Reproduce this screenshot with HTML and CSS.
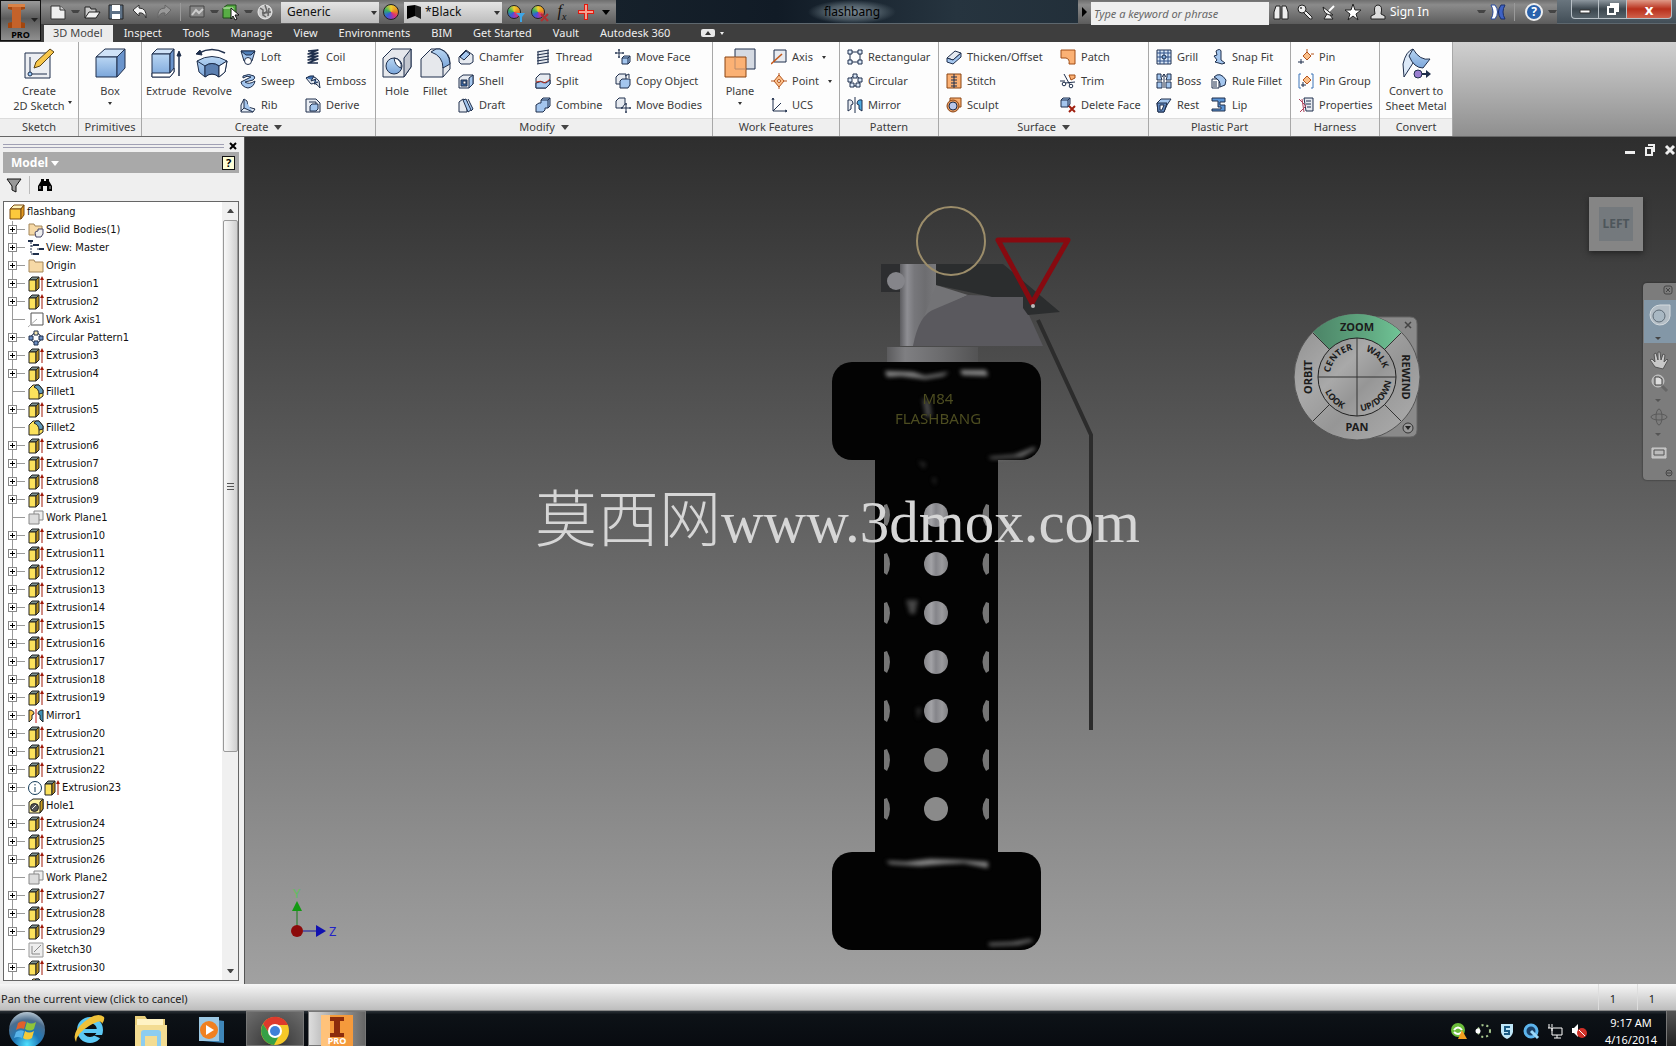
FILE: index.html
```html
<!DOCTYPE html>
<html lang="en">
<head>
<meta charset="utf-8">
<title>flashbang</title>
<link rel="stylesheet" href="styles.css">
</head>
<body>
<svg class="defs" aria-hidden="true">
  <defs>
    <linearGradient id="g-blue" x1="0" y1="0" x2="0" y2="1"><stop offset="0" stop-color="#b9d6f3"/><stop offset="1" stop-color="#7ba6da"/></linearGradient>
    <linearGradient id="g-steel" x1="0" x2="1" y1="0" y2="0"><stop offset="0" stop-color="#5c5c60"/><stop offset=".2" stop-color="#8e8e93"/><stop offset=".4" stop-color="#77777b"/><stop offset=".7" stop-color="#6d6d70"/><stop offset="1" stop-color="#78787b"/></linearGradient>
    <linearGradient id="g-neck" x1="0" x2="1" y1="0" y2="0"><stop offset="0" stop-color="#5b5b5d"/><stop offset=".2" stop-color="#7f7f82"/><stop offset=".6" stop-color="#6b6b6d"/><stop offset="1" stop-color="#535354"/></linearGradient>
    <linearGradient id="g-hole" x1="0" x2="1" y1="0" y2="0"><stop offset="0" stop-color="#87878a"/><stop offset=".3" stop-color="#a2a2a6"/><stop offset=".5" stop-color="#85858a"/><stop offset=".75" stop-color="#9a9a9d"/><stop offset="1" stop-color="#808083"/></linearGradient>
    <radialGradient id="g-orb" cx=".5" cy=".9" r=".9"><stop offset="0" stop-color="#4fe0ff"/><stop offset=".4" stop-color="#1e78b8"/><stop offset=".75" stop-color="#4c6d8d"/><stop offset="1" stop-color="#b8c8d4"/></radialGradient>
    <linearGradient id="g-wheel" x1="0" y1="0" x2="1" y2="1"><stop offset="0" stop-color="#8c8c8c"/><stop offset=".35" stop-color="#a9a9a9"/><stop offset=".6" stop-color="#969696"/><stop offset="1" stop-color="#b0b0b0"/></linearGradient>
    <linearGradient id="g-green" x1="0" x2="1" y1="0" y2="0"><stop offset="0" stop-color="#4c8467"/><stop offset=".6" stop-color="#5fa67f"/><stop offset="1" stop-color="#70c496"/></linearGradient>
    <filter id="soft" x="-20%" y="-60%" width="140%" height="220%"><feGaussianBlur stdDeviation="2"/></filter>
  </defs>
  <!-- large ribbon icons -->
  <symbol id="b-sketch" viewBox="0 0 32 32"><rect x="2" y="6" width="25" height="25" fill="#eceef2"/><path d="M7 10v17h17" fill="none"/><circle cx="7" cy="27" r="2" fill="#9cf"/><path d="M11 21l2-6L27 2l4 3-14 14z" fill="#f7c64a" stroke="#5a4416"/></symbol>
  <symbol id="b-box" viewBox="0 0 32 32"><path d="M2 10l9-8h20l-8 8z" fill="#cfe2f7"/><path d="M2 10h21v20H2z" fill="url(#g-blue)"/><path d="M23 10l8-8v19l-8 9z" fill="#6a94cc"/></symbol>
  <symbol id="b-extrude" viewBox="0 0 32 32"><path d="M2 7l5-5h17l-4 5z" fill="#cfe2f7"/><path d="M2 7h18v23H2z" fill="url(#g-blue)"/><path d="M20 7l4-5v23l-4 5z" fill="#6a94cc"/><path d="M2 26h18l4-5v4l-4 5H2z" fill="#fff"/><path d="M29 29V6" stroke-width="1.5"/><path d="M27 9l2-5 2 5z" fill="#1f2f4c"/></symbol>
  <symbol id="b-revolve" viewBox="0 0 32 32"><path d="M1 14q15-9 30 0l-2 11-6 5q-7-6-14 0l-6-5z" fill="url(#g-blue)"/><path d="M1 14l8 5q7-5 14 0l8-5M9 19v11M23 19v11" fill="none"/><path d="M9 19q7-5 14 0v11q-7-6-14 0z" fill="#5b7fb0"/><path d="M23 19l8-5-2 11-6 5z" fill="#fff"/><path d="M3 6q13-7 26 0" fill="none" stroke-width="1.600"/><path d="M0 7l4-4 2 5z" fill="#1f2f4c"/></symbol>
  <symbol id="b-hole" viewBox="0 0 32 32"><path d="M2 11l9-9h19v18l-7 10H2z" fill="#e6e8ec"/><path d="M23 11l7-9v18l-7 10z" fill="#c3c7d0"/><circle cx="13" cy="19" r="8" fill="url(#g-blue)"/><path d="M13 11a8 8 0 0 1 7 10q-6-2-7-10z" fill="#fff"/></symbol>
  <symbol id="b-fillet" viewBox="0 0 32 32"><path d="M2 12l10-10h9q10 3 10 14v6l-7 8H2z" fill="#e6e8ec"/><path d="M12 5l5-3h4q9 3 10 15l-7 4q0-12-12-16z" fill="url(#g-blue)"/><path d="M24 20v10"/></symbol>
  <symbol id="b-plane" viewBox="0 0 32 32"><rect x="11" y="2" width="20" height="20" fill="#d5dae2"/><rect x="1" y="10" width="21" height="20" fill="#fbb174" stroke="#8a4413"/><path d="M11 10v12h11" fill="none" stroke="#b98a6a"/></symbol>
  <symbol id="b-convert" viewBox="0 0 32 32"><path d="M3 17Q6 4 13 2v14L4 30z" fill="#dce9f8"/><path d="M13 2q7 12 17 10l-7 9q-9 0-14-12z" fill="url(#g-blue)"/><circle cx="18" cy="27" r="4" fill="#9a7fd0"/><path d="M22 27h7" stroke-width="2"/><path d="M26 23l5 4-5 4z" fill="#1f2f4c" stroke="none"/></symbol>
  <!-- small ribbon icons -->
  <symbol id="s-loft" viewBox="0 0 16 16"><path d="M1 2h14l-3 10H4z"/><path d="M1 2l5 4h5l4-4z" fill="#4f7fb9"/><circle cx="8" cy="12" r="3.500" fill="#fff"/></symbol>
  <symbol id="s-sweep" viewBox="0 0 16 16"><path d="M3 3q6-3 11 0 2 2-1 4l-8 2q4 3 10-1-1 6-7 7-6-1-7-6l10-5q-4-2-8 1z"/></symbol>
  <symbol id="s-rib" viewBox="0 0 16 16"><path d="M1 8l3-6 3 2 1 6 7 2-2 3H1z" fill="#e4ecf6"/><path d="M4 2v9l9 4M4 11l-3 3"/></symbol>
  <symbol id="s-coil" viewBox="0 0 16 16"><path d="M3 2l10-1L3 5l10-1L3 8l10-1L3 11l10-1L3 14l10 0" fill="none" stroke-width="1.400"/></symbol>
  <symbol id="s-emboss" viewBox="0 0 16 16"><path d="M1 5q8-4 13 3l1 7q-4-6-9-4z" fill="#dfe6ef"/><path d="M1 5q4-3 8-2L6 8l5-2-2 5 4-2" fill="#3f6fae"/></symbol>
  <symbol id="s-derive" viewBox="0 0 16 16"><path d="M1 2h10l4 4v9H1z" fill="#e9edf3"/><path d="M4 5h7v3" fill="none"/><path d="M5 9l2-2h6v5l-2 2H5z"/></symbol>
  <symbol id="s-chamfer" viewBox="0 0 16 16"><path d="M1 8l7-7 7 5v7l-3 2H3l-2-2z" fill="#e6eaf0"/><path d="M2 8l6-6 4 3-6 6z"/></symbol>
  <symbol id="s-shell" viewBox="0 0 16 16"><path d="M1 5l4-3h10v9l-4 4H1z" fill="#e6eaf0"/><path d="M11 5l4-3v9l-4 4z"/><rect x="3" y="7" width="6" height="6" fill="#3f6fae"/><rect x="5" y="8" width="3" height="3" fill="#fff"/></symbol>
  <symbol id="s-draft" viewBox="0 0 16 16"><path d="M1 5l4-3 4 2v11H1z" fill="#e6eaf0"/><path d="M5 3l3-1 5 11-3 2zM10 2l5 10-2 2"/></symbol>
  <symbol id="s-thread" viewBox="0 0 16 16"><path d="M3 1h10v14H3z" fill="#e6eaf0" stroke="none"/><path d="M2 3l12-2M2 6l12-2M2 9l12-2M2 12l12-2M2 15l12-2M3 3v12M13 1v12" fill="none"/></symbol>
  <symbol id="s-split" viewBox="0 0 16 16"><path d="M1 5l4-4h10v10l-4 4H1z" fill="#e6eaf0"/><path d="M1 10v5h10l4-4V7l-4 3q-5-3-10 0z"/><path d="M1 9q5-2 8 1 3-1 6-4" stroke="#c03020" fill="none"/></symbol>
  <symbol id="s-combine" viewBox="0 0 16 16"><path d="M1 8l3-2h2V3l2-2h7v8l-2 2h-3v2l-2 2H1z"/><path d="M6 3h7v8M13 3l2-2" fill="none"/></symbol>
  <symbol id="s-mface" viewBox="0 0 16 16"><path d="M4 0v9M0 4h9M3 1h2M3 8h2M1 3v2M8 3v2"/><path d="M7 9l2-2h6v6l-2 2H7z"/><path d="M7 9h6v6M13 9l2-2" fill="none"/></symbol>
  <symbol id="s-copy" viewBox="0 0 16 16"><path d="M1 4l3-3h7v6l-3 4H1z" fill="#e6eaf0"/><path d="M5 8l2-2h8v6l-2 3H5z"/><path d="M10 3l4-2v4" fill="none"/></symbol>
  <symbol id="s-mbody" viewBox="0 0 16 16"><path d="M1 4l3-3h6v6l-3 4H1z" fill="#e6eaf0"/><path d="M11 6v10M6 11h10M10 7h2M10 15h2M7 10v2M15 10v2"/></symbol>
  <symbol id="s-axis" viewBox="0 0 16 16"><path d="M3 1h12v12H3z" fill="#e8ebf0"/><path d="M0 15L11 5" stroke="#c4581a" stroke-width="1.600"/></symbol>
  <symbol id="s-point" viewBox="0 0 16 16"><path d="M8 2l5 6-5 6-5-6z" fill="#fbc08a" stroke="#b5541c"/><path d="M0 8h3M13 8h3M8 0v2M8 14v2" stroke="#b5541c"/><circle cx="8" cy="8" r="1.500" fill="#fff" stroke="#b5541c"/></symbol>
  <symbol id="s-ucs" viewBox="0 0 16 16"><path d="M2 1v13h14M2 14l8-8M1 3l1-2 1 2M14 13l2 1-2 1" fill="none"/></symbol>
  <symbol id="s-rect" viewBox="0 0 16 16"><path d="M3 3h10v10H3z" fill="none"/><path d="M1 1h4v4H1zM11 1h4v4h-4zM1 11h4v4H1zM11 11h4v4h-4z" fill="#dce9f8"/></symbol>
  <symbol id="s-circ" viewBox="0 0 16 16"><circle cx="8" cy="8" r="5" fill="none"/><path d="M6 1h4v4H6zM11 5h4v4h-4zM1 5h4v4H1zM3 10h4v4H3zM9 10h4v4H9z" fill="#dce9f8"/></symbol>
  <symbol id="s-mirror" viewBox="0 0 16 16"><path d="M1 3q5-1 5 4l-2 1v4l-3 2z" fill="#e6eaf0"/><path d="M15 3q-5-1-5 4l2 1v4l3 2z" fill="#4fa9df"/><path d="M8 0v16"/></symbol>
  <symbol id="s-thick" viewBox="0 0 16 16"><path d="M1 9l8-7 6 2-8 7z" fill="#e6eaf0"/><path d="M1 9l6 2 8-7v4l-8 7-6-2z"/></symbol>
  <symbol id="s-stitch" viewBox="0 0 16 16"><path d="M1 1h14v14H1z" fill="#fbb174" stroke="#8a4413"/><path d="M8 1v14M5 4h6M5 7h6M5 10h6M5 13h6"/></symbol>
  <symbol id="s-sculpt" viewBox="0 0 16 16"><path d="M4 1h11v9H4z" fill="#fbb174" stroke="#8a4413"/><circle cx="7" cy="9" r="6" fill="#e59a62" stroke="#8a4413"/><circle cx="7" cy="9" r="4" fill="#b8c6ea"/></symbol>
  <symbol id="s-patch" viewBox="0 0 16 16"><path d="M1 1h14v14h-6q1-5-3-6H1z" fill="#fbb174" stroke="#a04d16"/></symbol>
  <symbol id="s-trim" viewBox="0 0 16 16"><path d="M9 2h6v3l-4 2z" fill="#fbb174" stroke="#a04d16"/><path d="M0 8h5M4 1l6 11M15 9L5 10" fill="none"/><circle cx="11" cy="13" r="1.800" fill="#fff"/><circle cx="4" cy="11" r="1.800" fill="#fff"/></symbol>
  <symbol id="s-delface" viewBox="0 0 16 16"><path d="M1 3l2-2h7v6l-2 3H1z"/><path d="M8 3v7M8 3l2-2M1 3h7" fill="none"/><path d="M9 9l6 6M15 9l-6 6" stroke="#a02010" stroke-width="2"/></symbol>
  <symbol id="s-grill" viewBox="0 0 16 16"><path d="M1 1h14v14H1z" fill="#d7e5f6"/><path d="M4 1v14M8 1v14M12 1v14M1 4h14M1 8h14M1 12h14" stroke="#2d4f86"/><circle cx="8" cy="8" r="2" fill="#7ba6da"/></symbol>
  <symbol id="s-boss" viewBox="0 0 16 16"><path d="M1 1h4v3l1 3-5 0zM11 1h4v6h-5l1-3zM1 9h5v6H1zM10 9h5v6h-5z"/><path d="M8 15V1M6 4l2-3 2 3" fill="none"/></symbol>
  <symbol id="s-rest" viewBox="0 0 16 16"><path d="M1 6l4-4h10l-4 6-3 7H2z"/><path d="M1 6h10l-3 9H2z" fill="#5f86bd"/><path d="M4 8h4l-2 5H4z" fill="#fff"/></symbol>
  <symbol id="s-snap" viewBox="0 0 16 16"><path d="M5 2q4-3 5 0v9l4 3-3 1-7-2 2-2-3-4 3-1z"/></symbol>
  <symbol id="s-rulef" viewBox="0 0 16 16"><path d="M3 4q6-6 12 3l-1 5-5 2q1-7-6-10z"/><path d="M1 6h5l2 2v7H1z" fill="#fff"/><path d="M2 9h4M2 11h4M2 13h4"/></symbol>
  <symbol id="s-lip" viewBox="0 0 16 16"><path d="M1 1h13v4H9v3h5v6H1v-2h9v-2H7V4H1z" fill="#5c95d6"/></symbol>
  <symbol id="s-pin" viewBox="0 0 16 16"><path d="M9 3l4 4-4 4-4-4z" fill="#fbc08a" stroke="#b5541c"/><path d="M13 5h3M9 0v3" stroke="#b5541c"/><path d="M3 10v5M0 13h6"/></symbol>
  <symbol id="s-ping" viewBox="0 0 16 16"><path d="M3 1H1v14h2M13 1h2v14h-2" fill="none" stroke="#3c74b8"/><path d="M9 3l4 4-4 4-4-4z" fill="#fbc08a" stroke="#b5541c"/><path d="M5 9v5M3 12h5"/></symbol>
  <symbol id="s-prop" viewBox="0 0 16 16"><path d="M6 1h9v13H8z" fill="#e6eaf0"/><path d="M8 4h5M8 7h5M9 10h4"/><path d="M1 2l7 7-6 6M4 2l2 13" fill="none" stroke="#b0405a"/></symbol>
  <!-- browser tree icons -->
  <symbol id="t-ext" viewBox="0 0 16 16"><path d="M1 4l3-3h7L8 4z" fill="#7d9390" stroke="#222"/><path d="M1 4h7v11H1z" fill="#fce25c" stroke="#222"/><path d="M8 4l3-3v11l-3 3z" fill="#b88f1c" stroke="#222"/><path d="M14 15V3" stroke="#a01808"/><path d="M12 4l2-4 2 4z" fill="#a01808" stroke="none"/></symbol>
  <symbol id="t-part" viewBox="0 0 16 16"><path d="M1 5l4-4h10l-3 4z" fill="#fff2b8" stroke="#7a4a10"/><path d="M1 5h11v10H1z" fill="#fcc93c" stroke="#7a4a10"/><path d="M12 5l3-4v10l-3 4z" fill="#e29a20" stroke="#7a4a10"/></symbol>
  <symbol id="t-fold" viewBox="0 0 16 16"><path d="M1 14V2h5l1 2h8v10z" fill="#f6d9a6" stroke="#a3865a"/></symbol>
  <symbol id="t-solid" viewBox="0 0 16 16"><path d="M1 13V2h5l1 2h7v9z" fill="#f6d9a6" stroke="#a3865a"/><path d="M7 11q0-2 3-2V7h5v5l-2 3H8z" fill="#eee" stroke="#446"/></symbol>
  <symbol id="t-view" viewBox="0 0 16 16"><path d="M3 2v12h4M3 6h3M9 9h3" fill="none" stroke-dasharray="2 1"/><path d="M0 1h5M5 5h6M11 9h5M5 14h6" stroke-width="2"/></symbol>
  <symbol id="t-axis" viewBox="0 0 16 16"><path d="M3 1h12v12H3z" fill="#fff" stroke="#555"/><path d="M0 15L9 7" stroke="#aaa"/></symbol>
  <symbol id="t-circ" viewBox="0 0 16 16"><circle cx="8" cy="8" r="5" fill="none"/><path d="M6 1h4v4H6z" fill="#f5e7b0"/><path d="M11 6h4v4h-4zM1 6h4v4H1zM6 11h4v4H6z" fill="#6d8fc2"/></symbol>
  <symbol id="t-fil" viewBox="0 0 16 16"><path d="M1 5l4-4h6l4 5v6l-4 3H1z" fill="#fce25c" stroke="#222"/><path d="M6 3l2-2h3l4 5v3l-4 1q0-5-5-7z" fill="#5f97b8" stroke="#222"/><path d="M11 10v5" stroke="#222"/></symbol>
  <symbol id="t-plane" viewBox="0 0 16 16"><path d="M6 1h9v9H6z" fill="#eee" stroke="#888"/><path d="M1 4h10v10H1z" fill="#dcdcdc" stroke="#888"/></symbol>
  <symbol id="t-mir" viewBox="0 0 16 16"><path d="M1 2q5 0 5 4l-2 1v4l-3 3z" fill="#f7c64a" stroke="#222"/><path d="M15 2q-5 0-5 4l2 1v4l3 3z" fill="#3f8fb4" stroke="#222"/><path d="M8 1v14" stroke="#c01010"/></symbol>
  <symbol id="t-hole" viewBox="0 0 16 16"><path d="M1 4l4-3h10v10l-3 4H1z" fill="#fff2a0" stroke="#222"/><path d="M12 4l3-3v10l-3 4z" fill="#c99d20" stroke="#222"/><circle cx="6.500" cy="9.500" r="4" fill="#555" stroke="#222"/><path d="M4 11l4-4" stroke="#eee"/></symbol>
  <symbol id="t-sk" viewBox="0 0 16 16"><path d="M1 1h14v14H1z" fill="#eee" stroke="#999"/><path d="M4 4v8h8M6 10l7-7" fill="none" stroke="#888"/></symbol>
  <symbol id="t-info" viewBox="0 0 16 16"><circle cx="7" cy="8" r="6.500" fill="#fff" stroke="#123a58"/><path d="M7 7v5M7 4v1.500" stroke="#123a58"/></symbol>
  <symbol id="t-bino" viewBox="0 0 16 16"><path d="M1 14V9l3-5V2h3v2h2V2h3v2l3 5v5h-5V9H6v5z" fill="#000" stroke="none"/><path d="M3 9v3M13 9v3" stroke="#bbb"/></symbol>
</svg>

<div class="app">
  <header class="top">
    <button class="appbtn" aria-label="Application menu">
      <svg viewBox="0 0 41 41" width="41" height="41"><path d="M8 4h17v5l-4 1v12l4 1v5H8v-5l4-1V10L8 9z" fill="#a3470f"/><path d="M12 4h9v24h-9z" fill="#c4622a"/><path d="M8 4h17v3H8z" fill="#d98247"/><path d="M31 18h7l-3.500 4z" fill="#222"/></svg>
      <span>PRO</span>
    </button>
    <div class="topright">
      <div class="title">
        <div class="qat">
          <button aria-label="New"><svg class="q" viewBox="0 0 16 16"><path d="M1 2h9l5 4v9H1z" fill="#eee" stroke="#333"/><path d="M10 2v4h5" fill="#ccc" stroke="#333"/></svg></button><i class="dot"></i>
          <button aria-label="Open"><svg class="q" viewBox="0 0 16 16"><path d="M1 14V3h5l1 2h5v3" fill="#ccc" stroke="#222"/><path d="M1 14l4-6h11l-4 6z" fill="#f0f0f0" stroke="#222"/></svg></button>
          <button aria-label="Save"><svg class="q" viewBox="0 0 16 16"><path d="M1 1h14v14H1z" fill="#5d7186" stroke="#222"/><path d="M4 1h8v6H4zM4 10h8v5H4z" fill="#fff"/></svg></button>
          <button aria-label="Undo"><svg class="q" viewBox="0 0 16 16"><path d="M1 6l6-5v3q8 0 7 10-2-6-7-5v3z" fill="#f4f4f4" stroke="#333"/></svg></button>
          <button aria-label="Redo"><svg class="q" viewBox="0 0 16 16"><path d="M15 6L9 1v3Q1 4 2 14q2-6 7-5v3z" fill="#999" stroke="#666"/></svg></button>
          <i class="vsep"></i>
          <button aria-label="Select"><svg class="q" viewBox="0 0 16 16"><path d="M1 2h14v11H1z" fill="#888" stroke="#444"/><path d="M3 11l4-5 3 3 4-4" fill="none" stroke="#ccc" stroke-width="2"/></svg></button><i class="dot"></i>
          <button aria-label="Select bodies"><svg class="q" viewBox="0 0 16 16"><path d="M0 4l4-3h9v9l-3 4H0z" fill="#58ae45" stroke="#1d4a16"/><path d="M0 4h10v10" fill="none" stroke="#d4f0c8"/><path d="M8 4v11l2-3 2 4 2-1-2-4h4z" fill="#fff" stroke="#111"/></svg></button><i class="dot"></i>
          <button aria-label="Material"><svg class="q" viewBox="0 0 16 16"><circle cx="8" cy="8" r="7" fill="#c8c8c8" stroke="#eee"/><path d="M3 4l3 2v5l3 2M8 1l2 6-3 3M12 4l-1 8M5 9l9-1" fill="none" stroke="#666" stroke-width="1.500"/></svg></button>
          <label class="sel gen"><select aria-label="Material"><option>Generic</option></select></label>
          <button aria-label="Appearance"><i class="hue"></i></button>
          <label class="sel blk"><svg width="14" height="16" viewBox="0 0 14 16"><path d="M0 2l8-1v11l-8 3z" fill="#000"/><path d="M8 1l6 2v12l-6-3z" fill="#222"/></svg><select aria-label="Appearance"><option>*Black</option></select></label>
          <button aria-label="Adjust"><i class="hue sm"></i><svg class="ov" width="9" height="9" viewBox="0 0 9 9"><path d="M0 0h9L6 4v5H4V4z" fill="#3da6e8"/></svg></button>
          <button aria-label="Clear"><i class="hue sm"></i><svg class="ov" width="9" height="9" viewBox="0 0 9 9"><path d="M1 1l7 7M8 1L1 8" stroke="#b03030" stroke-width="2"/></svg></button>
          <button class="fx" aria-label="Parameters"><i>f</i><sub>x</sub></button>
          <button aria-label="Add"><svg class="q" viewBox="0 0 16 16"><path d="M8 0v16M0 8h16" stroke="#e01a10" stroke-width="4"/><path d="M8 1v14M1 8h14" stroke="#f7a090" stroke-width="2"/></svg></button>
          <button class="tri" aria-label="Customize"></button>
        </div>
        <div class="caption"><span>flashbang</span></div>
        <div class="info">
          <i class="play"></i>
          <input type="text" placeholder="Type a keyword or phrase" aria-label="Search help">
          <button aria-label="Search"><svg class="q" viewBox="0 0 16 16"><path d="M1 15V8l2-6h4v13zM9 15V2h4l2 6v7z" fill="#eee" stroke="#222"/></svg></button>
          <button aria-label="Key"><svg class="q" viewBox="0 0 16 16"><path d="M6 8l7 7q3 1 2-2L8 6z" fill="#eee" stroke="#222"/><circle cx="5" cy="5" r="4" fill="#eee" stroke="#222"/><circle cx="4" cy="4" r="1" fill="#444"/></svg></button>
          <button aria-label="Communication"><svg class="q" viewBox="0 0 16 16"><path d="M2 3q1 9 10 8zM6 10l-3 5h9l-3-4" fill="#eee" stroke="#222"/><path d="M8 7l5-5" stroke="#fff" stroke-width="2" fill="none"/></svg></button>
          <button aria-label="Favorites"><svg class="q" viewBox="0 0 16 16"><path d="M8 0l2 6h6l-5 4 2 6-5-4-5 4 2-6-5-4h6z" fill="#fff" stroke="#222"/></svg></button>
          <button class="sign"><svg class="q" viewBox="0 0 16 16"><path d="M5 10Q3 1 8 1t3 9l4 2v3H1v-3z" fill="#ddd" stroke="#222"/></svg>Sign In</button>
          <i class="dot push"></i>
          <button aria-label="Exchange"><svg class="q" viewBox="0 0 16 16"><path d="M1 1h4q5 7 0 14H1q4-7 0-14z" fill="#fff" stroke="#27489c"/><path d="M15 1h-4q-5 7 0 14h4q-4-7 0-14z" fill="#3e62c4" stroke="#1b2f6b"/></svg></button>
          <i class="vsep"></i>
          <button class="help" aria-label="Help">?</button><i class="dot"></i>
        </div>
        <div class="win">
          <button aria-label="Minimize"><svg width="12" height="10" viewBox="0 0 12 10"><path d="M1 6h10v3H1z" fill="#fff" stroke="#333"/></svg></button>
          <button aria-label="Restore"><svg width="12" height="12" viewBox="0 0 12 12"><path d="M4 1h7v7H9V3H4zM1 4h7v7H1z" fill="none" stroke="#fff" stroke-width="2"/></svg></button>
          <button class="close" aria-label="Close">x</button>
        </div>
      </div>
      <nav class="tabs">
        <a href="#" class="on">3D Model</a><a href="#">Inspect</a><a href="#">Tools</a><a href="#">Manage</a><a href="#">View</a><a href="#">Environments</a><a href="#">BIM</a><a href="#">Get Started</a><a href="#">Vault</a><a href="#">Autodesk 360</a>
        <button class="mini" aria-label="Minimize ribbon"></button><i class="mcaret"></i>
      </nav>
    </div>
  </header>

  <section class="ribbon" aria-label="Ribbon">
    <div class="panel p-sketch"><div class="body"><button class="big"><svg class="ic"><use href="#b-sketch"/></svg>Create<br>2D Sketch<i class="car side"></i></button></div><h2>Sketch</h2></div>
    <div class="panel p-prim"><div class="body"><button class="big"><svg class="ic"><use href="#b-box"/></svg>Box<i class="car"></i></button></div><h2>Primitives</h2></div>
    <div class="panel p-create"><div class="body">
      <button class="big"><svg class="ic"><use href="#b-extrude"/></svg>Extrude</button>
      <button class="big"><svg class="ic"><use href="#b-revolve"/></svg>Revolve</button>
      <div class="col"><button><svg class="ic"><use href="#s-loft"/></svg>Loft</button><button><svg class="ic"><use href="#s-sweep"/></svg>Sweep</button><button><svg class="ic"><use href="#s-rib"/></svg>Rib</button></div>
      <div class="col"><button><svg class="ic"><use href="#s-coil"/></svg>Coil</button><button><svg class="ic"><use href="#s-emboss"/></svg>Emboss</button><button><svg class="ic"><use href="#s-derive"/></svg>Derive</button></div>
    </div><h2>Create <i class="dn"></i></h2></div>
    <div class="panel p-modify"><div class="body">
      <button class="big"><svg class="ic"><use href="#b-hole"/></svg>Hole</button>
      <button class="big"><svg class="ic"><use href="#b-fillet"/></svg>Fillet</button>
      <div class="col"><button><svg class="ic"><use href="#s-chamfer"/></svg>Chamfer</button><button><svg class="ic"><use href="#s-shell"/></svg>Shell</button><button><svg class="ic"><use href="#s-draft"/></svg>Draft</button></div>
      <div class="col"><button><svg class="ic"><use href="#s-thread"/></svg>Thread</button><button><svg class="ic"><use href="#s-split"/></svg>Split</button><button><svg class="ic"><use href="#s-combine"/></svg>Combine</button></div>
      <div class="col"><button><svg class="ic"><use href="#s-mface"/></svg>Move Face</button><button><svg class="ic"><use href="#s-copy"/></svg>Copy Object</button><button><svg class="ic"><use href="#s-mbody"/></svg>Move Bodies</button></div>
    </div><h2>Modify <i class="dn"></i></h2></div>
    <div class="panel p-work"><div class="body">
      <button class="big"><svg class="ic"><use href="#b-plane"/></svg>Plane<i class="car"></i></button>
      <div class="col"><button><svg class="ic"><use href="#s-axis"/></svg>Axis<i class="car in"></i></button><button><svg class="ic"><use href="#s-point"/></svg>Point<i class="car in"></i></button><button><svg class="ic"><use href="#s-ucs"/></svg>UCS</button></div>
    </div><h2>Work Features</h2></div>
    <div class="panel p-pattern"><div class="body">
      <div class="col"><button><svg class="ic"><use href="#s-rect"/></svg>Rectangular</button><button><svg class="ic"><use href="#s-circ"/></svg>Circular</button><button><svg class="ic"><use href="#s-mirror"/></svg>Mirror</button></div>
    </div><h2>Pattern</h2></div>
    <div class="panel p-surface"><div class="body">
      <div class="col"><button><svg class="ic"><use href="#s-thick"/></svg>Thicken/Offset</button><button><svg class="ic"><use href="#s-stitch"/></svg>Stitch</button><button><svg class="ic"><use href="#s-sculpt"/></svg>Sculpt</button></div>
      <div class="col"><button><svg class="ic"><use href="#s-patch"/></svg>Patch</button><button><svg class="ic"><use href="#s-trim"/></svg>Trim</button><button><svg class="ic"><use href="#s-delface"/></svg>Delete Face</button></div>
    </div><h2>Surface <i class="dn"></i></h2></div>
    <div class="panel p-plastic"><div class="body">
      <div class="col"><button><svg class="ic"><use href="#s-grill"/></svg>Grill</button><button><svg class="ic"><use href="#s-boss"/></svg>Boss</button><button><svg class="ic"><use href="#s-rest"/></svg>Rest</button></div>
      <div class="col"><button><svg class="ic"><use href="#s-snap"/></svg>Snap Fit</button><button><svg class="ic"><use href="#s-rulef"/></svg>Rule Fillet</button><button><svg class="ic"><use href="#s-lip"/></svg>Lip</button></div>
    </div><h2>Plastic Part</h2></div>
    <div class="panel p-harness"><div class="body">
      <div class="col"><button><svg class="ic"><use href="#s-pin"/></svg>Pin</button><button><svg class="ic"><use href="#s-ping"/></svg>Pin Group</button><button><svg class="ic"><use href="#s-prop"/></svg>Properties</button></div>
    </div><h2>Harness</h2></div>
    <div class="panel p-convert"><div class="body"><button class="big"><svg class="ic"><use href="#b-convert"/></svg>Convert to<br>Sheet Metal</button></div><h2>Convert</h2></div>
  </section>

  <main class="work">
    <aside class="browser">
      <div class="grip"><i></i><button aria-label="Close browser"><svg width="8" height="8" viewBox="0 0 8 8"><path d="M1 1l6 6M7 1L1 7" stroke="#000" stroke-width="2"/></svg></button></div>
      <div class="bhead"><button>Model <i></i></button><button class="bhelp" aria-label="Help">?</button></div>
      <div class="btools"><button aria-label="Filter"><svg width="16" height="16" viewBox="0 0 16 16"><path d="M1 2h14L10 9v6l-4-2V9z" fill="#999" stroke="#111"/></svg></button><i></i><button aria-label="Find"><svg width="16" height="16"><use href="#t-bino"/></svg></button></div>
      <div class="treebox">
        <ul class="tree">
          <li class="root"><svg class="ic"><use href="#t-part"/></svg>flashbang</li>
          <li><button aria-label="Expand"></button><svg class="ic"><use href="#t-solid"/></svg>Solid Bodies(1)</li>
          <li><button aria-label="Expand"></button><svg class="ic"><use href="#t-view"/></svg>View: Master</li>
          <li><button aria-label="Expand"></button><svg class="ic"><use href="#t-fold"/></svg>Origin</li>
          <li><button aria-label="Expand"></button><svg class="ic"><use href="#t-ext"/></svg>Extrusion1</li>
          <li><button aria-label="Expand"></button><svg class="ic"><use href="#t-ext"/></svg>Extrusion2</li>
          <li><svg class="ic"><use href="#t-axis"/></svg>Work Axis1</li>
          <li><button aria-label="Expand"></button><svg class="ic"><use href="#t-circ"/></svg>Circular Pattern1</li>
          <li><button aria-label="Expand"></button><svg class="ic"><use href="#t-ext"/></svg>Extrusion3</li>
          <li><button aria-label="Expand"></button><svg class="ic"><use href="#t-ext"/></svg>Extrusion4</li>
          <li><svg class="ic"><use href="#t-fil"/></svg>Fillet1</li>
          <li><button aria-label="Expand"></button><svg class="ic"><use href="#t-ext"/></svg>Extrusion5</li>
          <li><svg class="ic"><use href="#t-fil"/></svg>Fillet2</li>
          <li><button aria-label="Expand"></button><svg class="ic"><use href="#t-ext"/></svg>Extrusion6</li>
          <li><button aria-label="Expand"></button><svg class="ic"><use href="#t-ext"/></svg>Extrusion7</li>
          <li><button aria-label="Expand"></button><svg class="ic"><use href="#t-ext"/></svg>Extrusion8</li>
          <li><button aria-label="Expand"></button><svg class="ic"><use href="#t-ext"/></svg>Extrusion9</li>
          <li><svg class="ic"><use href="#t-plane"/></svg>Work Plane1</li>
          <li><button aria-label="Expand"></button><svg class="ic"><use href="#t-ext"/></svg>Extrusion10</li>
          <li><button aria-label="Expand"></button><svg class="ic"><use href="#t-ext"/></svg>Extrusion11</li>
          <li><button aria-label="Expand"></button><svg class="ic"><use href="#t-ext"/></svg>Extrusion12</li>
          <li><button aria-label="Expand"></button><svg class="ic"><use href="#t-ext"/></svg>Extrusion13</li>
          <li><button aria-label="Expand"></button><svg class="ic"><use href="#t-ext"/></svg>Extrusion14</li>
          <li><button aria-label="Expand"></button><svg class="ic"><use href="#t-ext"/></svg>Extrusion15</li>
          <li><button aria-label="Expand"></button><svg class="ic"><use href="#t-ext"/></svg>Extrusion16</li>
          <li><button aria-label="Expand"></button><svg class="ic"><use href="#t-ext"/></svg>Extrusion17</li>
          <li><button aria-label="Expand"></button><svg class="ic"><use href="#t-ext"/></svg>Extrusion18</li>
          <li><button aria-label="Expand"></button><svg class="ic"><use href="#t-ext"/></svg>Extrusion19</li>
          <li><button aria-label="Expand"></button><svg class="ic"><use href="#t-mir"/></svg>Mirror1</li>
          <li><button aria-label="Expand"></button><svg class="ic"><use href="#t-ext"/></svg>Extrusion20</li>
          <li><button aria-label="Expand"></button><svg class="ic"><use href="#t-ext"/></svg>Extrusion21</li>
          <li><button aria-label="Expand"></button><svg class="ic"><use href="#t-ext"/></svg>Extrusion22</li>
          <li><button aria-label="Expand"></button><svg class="ic flag"><use href="#t-info"/></svg><svg class="ic"><use href="#t-ext"/></svg>Extrusion23</li>
          <li><svg class="ic"><use href="#t-hole"/></svg>Hole1</li>
          <li><button aria-label="Expand"></button><svg class="ic"><use href="#t-ext"/></svg>Extrusion24</li>
          <li><button aria-label="Expand"></button><svg class="ic"><use href="#t-ext"/></svg>Extrusion25</li>
          <li><button aria-label="Expand"></button><svg class="ic"><use href="#t-ext"/></svg>Extrusion26</li>
          <li><svg class="ic"><use href="#t-plane"/></svg>Work Plane2</li>
          <li><button aria-label="Expand"></button><svg class="ic"><use href="#t-ext"/></svg>Extrusion27</li>
          <li><button aria-label="Expand"></button><svg class="ic"><use href="#t-ext"/></svg>Extrusion28</li>
          <li><button aria-label="Expand"></button><svg class="ic"><use href="#t-ext"/></svg>Extrusion29</li>
          <li><svg class="ic"><use href="#t-sk"/></svg>Sketch30</li>
          <li><button aria-label="Expand"></button><svg class="ic"><use href="#t-ext"/></svg>Extrusion30</li>
          <li><svg class="ic"><use href="#t-fil"/></svg></li>
        </ul>
        <div class="sbar"><i class="up"></i><div class="thumb"><i></i></div><i class="down"></i></div>
      </div>
    </aside>

    <section class="view" aria-label="Graphics window">
      <svg class="model" width="270" height="750" viewBox="830 202 270 750">
        <path d="M881 264h55v28h-55z" fill="#2d2e30"/>
        <path d="M900 264h36v82h-36z" fill="url(#g-steel)"/>
        <path d="M936 285l32 10-33 16-22 35z" fill="#737376"/>
        <path d="M913 346q6-32 22-37l33-14 55 2 6 18 14 31z" fill="#5a595e"/>
        <path d="M936 264h67l57 48-32 3-5-7v-11l-31 0-56-12z" fill="#2b2d2e"/>
        <circle cx="896" cy="281" r="9" fill="#85858a"/>
        <path d="M887 347h91v16h-91z" fill="url(#g-neck)"/>
        <circle cx="951" cy="241" r="34" fill="none" stroke="#9c8d6a" stroke-width="2"/>
        <path d="M998 240h70l-36 63z" fill="none" stroke="#870a10" stroke-width="5" stroke-linejoin="round"/>
        <circle cx="1033" cy="306" r="2" fill="#bbb"/>
        <path d="M1038 320l53 115v295" fill="none" stroke="#2c2c2c" stroke-width="4"/>
        <path d="M875 455h123v402H875z" fill="#030303"/>
        <rect x="832" y="362" width="209" height="98" rx="20" fill="#030303"/>
        <rect x="832" y="852" width="209" height="98" rx="20" fill="#030303"/>
        <g filter="url(#soft)" fill="#8a8a8a">
          <path d="M885 371l28 1 12 4 24-4-6 4-18 3-24-3-14 1zM960 370h26l2 6-26-1z"/>
          <path d="M886 861l20 1 24-3 28 1 30 2v6l-24-5-20 1-24 2-30-2z"/>
          <path d="M988 457l26-2 20-8 2 2-14 8-30 2zM988 943l24-1 18-3 4 2-16 4-28 1z" opacity=".8"/>
          <path d="M922 398l8 4 2 14-6 2zM906 600l12 0-3 14-5 0z" opacity=".5"/>
          <path d="M918 461l8 2-2 6zM932 478l4 0-1 8zM916 708h6l-4 12z" opacity=".3"/>
        </g>
        <g fill="url(#g-hole)"><circle cx="936" cy="515" r="12"/><circle cx="936" cy="564" r="12"/><circle cx="936" cy="613" r="12"/><circle cx="936" cy="662" r="12"/><circle cx="936" cy="711" r="12"/></g>
        <circle cx="936" cy="760" r="12" fill="#7f7f7f"/><circle cx="936" cy="809" r="12" fill="#8a8a8a"/>
        <path id="lens" d="M884 505l3-1q6 11 0 22l-3-2zM989 505l-3-1q-7 11 0 22l3-2z" fill="#757575"/>
        <use href="#lens" y="49"/><use href="#lens" y="98"/><use href="#lens" y="147"/><use href="#lens" y="196"/><use href="#lens" y="245"/><use href="#lens" y="294"/>
        <g class="engrave" text-anchor="middle"><text x="938" y="404">M84</text><text x="938" y="424">FLASHBANG</text></g>
      </svg>
      <p class="mark"><span>莫西网</span>www.3dmox.com</p>
      <svg class="triad" width="60" height="60" viewBox="0 0 60 60">
        <path d="M12 44V22" stroke="#1c7a1c"/><path d="M7 25l5-10 5 10z" fill="#129a12"/><path d="M18 45h16" stroke="#1414a0"/><path d="M31 39l10 6-10 6z" fill="#1010b0"/><circle cx="12" cy="45" r="6" fill="#8c0a0a"/>
        <text x="8" y="12" fill="#5fbf5f">Y</text><text x="44" y="50" fill="#2222c8">Z</text>
      </svg>
      <svg class="wheel" width="130" height="130" viewBox="-64 -64 130 130">
        <path d="M0-60h53q7 0 7 7V53q0 7-7 7H0z" fill="#8a8a8a" stroke="#666"/>
        <circle r="63" fill="url(#g-wheel)" stroke="#555"/>
        <path d="M-44-45A63 63 0 0 1 44-45L27-27A39 39 0 0 0-27-27z" fill="url(#g-green)"/>
        <circle r="39" fill="url(#g-wheel)" stroke="#222"/>
        <path d="M0-39V39M-39 0H39M-44-44l17 17M44-44L27-27M-44 44l17-17M44 44L27 27" stroke="#333"/>
        <path d="M48-55l6 6M54-55l-6 6" stroke="#444" stroke-width="1.500"/><circle cx="51" cy="51" r="5" fill="#999" stroke="#333"/><path d="M48 49h6l-3 4z" fill="#222"/>
        <path id="a1" d="M-26 8A27 27 0 0 1 8-26" fill="none"/><path id="a2" d="M-4-27A27 27 0 0 1 27 4" fill="none"/><path id="a3" d="M-35-2A35 35 0 0 0 2 35" fill="none"/><path id="a4" d="M-4 34A34 34 0 0 0 34-4" fill="none"/>
        <g class="wt" text-anchor="middle">
          <text y="-46">ZOOM</text><text y="54">PAN</text><text transform="rotate(-90)" y="-45">ORBIT</text><text transform="rotate(90)" y="-45">REWIND</text>
          <g class="wi"><text><textPath href="#a1" startOffset="50%">CENTER</textPath></text><text><textPath href="#a2" startOffset="50%">WALK</textPath></text><text><textPath href="#a3" startOffset="50%">LOOK</textPath></text><text><textPath href="#a4" startOffset="50%">UP/DOWN</textPath></text></g>
        </g>
      </svg>
      <button class="cube"><span>LEFT</span></button>
      <div class="docwin">
        <button aria-label="Minimize"><svg width="12" height="12" viewBox="0 0 12 12"><path d="M1 7h10v3H1z" fill="#eee"/></svg></button>
        <button aria-label="Restore"><svg width="12" height="12" viewBox="0 0 12 12"><path d="M4 1h6v7M2 4h6v7H2z" fill="none" stroke="#eee" stroke-width="2"/></svg></button>
        <button aria-label="Close"><svg width="12" height="12" viewBox="0 0 12 12"><path d="M2 2l8 8M10 2l-8 8" stroke="#eee" stroke-width="3"/></svg></button>
      </div>
      <div class="navbar">
        <svg width="33" height="197" viewBox="0 0 33 197" fill="none" stroke="#444">
          <path d="M1 17h32v43H1z" fill="#8397a7" stroke="none"/>
          <rect x="21" y="3" width="8" height="8" rx="2"/><path d="M23 5l4 4M27 5l-4 4"/>
          <path d="M17 22h10v11a10 10 0 1 1-10-11z" fill="#b4bec6" stroke="#d5dbdf"/><circle cx="16" cy="33" r="6" fill="#a9b8c3" stroke="#5d6a75"/>
          <path d="M12 54h6l-3 3z" fill="#444" stroke="none"/>
          <path d="M12 84q-4-6-5-7l2-1 3 3-1-8 2-1 2 7V69h2l1 8 2-6 2 1-1 7 3-3 1 1-5 9z" fill="#c8c8c8" stroke="#555"/>
          <circle cx="15" cy="98" r="6" fill="#aaa" stroke="#c8c8c8"/><path d="M12 94h4l3 2v6h-7z" fill="#ddd"/><path d="M19 103l5 5" stroke-width="3" stroke="#666"/>
          <path d="M12 116h6l-3 3zM12 150h6l-3 3z" fill="#555" stroke="none"/>
          <g stroke="#5a5a5a"><ellipse cx="16" cy="134" rx="8" ry="3"/><ellipse cx="16" cy="134" rx="3" ry="8"/></g>
          <path d="M9 165h14v10H9z" fill="#bbb" stroke="#ccc"/><path d="M11 167h10v5H11z" stroke="#555"/><circle cx="26" cy="190" r="3"/><path d="M24 190h4"/>
        </svg>
      </div>
    </section>
  </main>

  <footer class="status"><span>Pan the current view (click to cancel)</span><b>1</b><b>1</b></footer>

  <nav class="task" aria-label="Taskbar">
    <button aria-label="Start"><svg width="40" height="35" viewBox="0 0 40 35"><circle cx="20" cy="19" r="18" fill="url(#g-orb)"/><path d="M11 12q4-3 8-1l-2 7q-4-2-8 1z" fill="#e2602a"/><path d="M20 11q4 3 9 0l-2 7q-4 3-9 0z" fill="#8fc43a"/><path d="M9 21q4-3 8-1l-2 7q-4-2-8 0z" fill="#59b4ea"/><path d="M18 20q4 3 9 0l-2 7q-5 3-9 0z" fill="#f6ca38"/></svg></button>
    <button aria-label="Internet Explorer"><svg width="36" height="35" viewBox="0 0 36 35"><circle cx="18" cy="19" r="10" fill="none" stroke="#5cc8f4" stroke-width="6"/><path d="M10 20h20" stroke="#5cc8f4" stroke-width="4"/><path d="M21 24h11v5z" fill="#0c1014"/><path d="M4 31Q-1 22 12 11T32 6q1 3-2 7 0-6-13 2T4 31z" fill="#f0c23a"/></svg></button>
    <button aria-label="Explorer"><svg width="36" height="35" viewBox="0 0 36 35"><path d="M2 10V5h10l2 3h18v27H2z" fill="#e9cf7c"/><path d="M4 8h26v10H4z" fill="#fff3c4"/><path d="M2 14h32v21H2z" fill="#f3dc92"/><path d="M8 35V22q0-3 3-3h14q3 0 3 3v13h-4V25H12v10z" fill="#8ccdf0"/></svg></button>
    <button aria-label="Media Player"><svg width="36" height="35" viewBox="0 0 36 35"><path d="M9 7l21 3v22l-21-2z" fill="#3f86b8"/><path d="M5 6h20v24H5z" fill="#9cc8e4"/><circle cx="15" cy="19" r="9" fill="#f08020"/><path d="M12 14l8 5-8 5z" fill="#fff"/></svg></button>
    <button class="lit" aria-label="Chrome"><svg width="36" height="35" viewBox="0 0 36 35"><circle cx="18" cy="19" r="14" fill="#f5c928"/><path d="M6 12A14 14 0 0 1 31 13H18l-6 8z" fill="#dd3a2c"/><path d="M6 12A14 14 0 0 0 17 33l6-11-11-1z" fill="#36a047"/><circle cx="18" cy="19" r="7" fill="#fff"/><circle cx="18" cy="19" r="5" fill="#3f80d8"/></svg></button>
    <button class="lit act" aria-label="Inventor"><svg width="36" height="35" viewBox="0 0 36 35"><path d="M2 3h32v32H2z" fill="#f59a3c"/><path d="M2 3h9v32H2z" fill="#ffc27a"/><path d="M11 5h14v4h-4v12h4v4H11v-4h4V9h-4z" fill="#8c2c0c"/></svg><small>PRO</small></button>
    <div class="tray">
      <svg viewBox="0 0 16 16"><circle cx="7" cy="7" r="7" fill="#6bbd3a"/><path d="M3 7q4-5 8 0M11 9q-4 4-8 0" stroke="#fff" stroke-width="2" fill="none"/><path d="M11 7l5 9H7z" fill="#f4a020"/></svg>
      <svg viewBox="0 0 16 16"><circle cx="9" cy="8" r="6" fill="none" stroke="#a8c890" stroke-width="2" stroke-dasharray="2 3"/><circle cx="3" cy="8" r="2.500" fill="#fff"/></svg>
      <svg viewBox="0 0 16 16"><path d="M2 1h12v8q-1 5-6 7-5-2-6-7z" fill="#bfe6f8"/><path d="M11 4H6v4h4v3H5" fill="none" stroke="#1a5a84" stroke-width="2"/></svg>
      <svg viewBox="0 0 16 16"><circle cx="8" cy="8" r="6" fill="#1a3f66" stroke="#5cb4ec" stroke-width="3"/><path d="M8 8l7 7" stroke="#9cd8f8" stroke-width="3"/></svg>
      <svg viewBox="0 0 16 16"><path d="M5 5h10v7H5zM7 15h7M10 12v3M2 1v4M5 1v3M1 5h4v3" fill="none" stroke="#fff"/></svg>
      <svg viewBox="0 0 16 16"><path d="M1 5h2l4-4v13l-4-4H1z" fill="#fff"/><circle cx="11" cy="10" r="5" fill="#d03028"/><path d="M8 7l6 6" stroke="#fff"/></svg>
      <time>9:17 AM<br>4/16/2014</time>
      <button class="desk" aria-label="Show desktop"></button>
    </div>
  </nav>
</div>
</body>
</html>
```
FILE: styles.css
```css
* { box-sizing: border-box; }
html, body { height: 100%; margin: 0; }
body { font: 12px/16px "Noto Sans", "Open Sans", sans-serif; color: #3c3c3c; overflow: hidden; }
button, select, input { font: inherit; color: inherit; border: 0; padding: 0; margin: 0; background: none; }
.defs { position: absolute; width: 0; height: 0; }
svg { display: block; flex: none; overflow: visible; }
.ic { fill: #a4c6ee; stroke: #1f2f4c; stroke-linejoin: round; width: 16px; height: 16px; }

.app { display: flex; flex-direction: column; height: 100vh; }

/* title bar and tabs */
.top { display: flex; flex: none; height: 42px; background: #3e3e3e; }
.appbtn { position: relative; width: 41px; height: 41px; background: linear-gradient(#9a9a9a, #5a5a5a 45%, #8f8f8f); border: 1px solid #111; flex: none; }
.appbtn svg { margin: -1px; }
.appbtn span { position: absolute; left: 0; right: 0; bottom: 0; font-weight: 700; font-size: 9px; line-height: 11px; color: #000; }
.topright { flex: 1; min-width: 0; }
.title { display: flex; height: 24px; background: linear-gradient(90deg, #0d141d, #1c2b3a 8%, #0f1822 16%, #16212b 35%, #111b26 45%, #26343f 56%, #101921); border-bottom: 1px solid #5d676e; }
.qat, .info { display: flex; align-items: center; height: 24px; background: linear-gradient(#6e6e6e, #8b8b8b 20%, #5c5c5c); }
.qat { padding-left: 5px; width: 575px; flex: none; }
.qat > button { position: relative; width: 24px; height: 22px; display: grid; place-items: center; flex: none; }
.q { width: 16px; height: 16px; }
.dot { width: 10px; flex: none; position: relative; height: 4px; }
.dot::after { content: ""; display: block; width: 5px; margin: 0 auto; border: solid transparent; border-width: 3px 2px 0; border-top-color: #444; }
.vsep { width: 1px; margin: 0 4px; height: 18px; background: #999; flex: none; }
.sel { position: relative; width: 98px; height: 21px; background: linear-gradient(#e4e4e4, #bdbdbd); display: flex; align-items: center; flex: none; color: #111; }
.sel.gen { margin-left: 4px; }
.sel select { appearance: none; width: 100%; padding-left: 6px; outline: 0; }
.sel.blk { margin-left: 1px; }
.sel.blk svg { margin-left: 3px; }
.sel.blk select { padding-left: 4px; }
.sel::after { content: ""; position: absolute; right: 2px; top: 9px; border: solid transparent; border-width: 4px 3px 0; border-top-color: #333; }
.hue { width: 16px; height: 16px; border-radius: 50%; border: 1px solid #222; background: conic-gradient(#f0d030, #e88a20 80deg, #e03070 130deg, #7a40c8 180deg, #2f60d8 230deg, #38b060 290deg, #f0d030); }
.hue.sm { width: 14px; height: 14px; }
.ov { position: absolute; right: 1px; bottom: 1px; }
.fx { color: #111; font: italic 16px/20px "Liberation Serif", serif; }
.qat > .fx { display: block; }
.fx sub { font-size: 10px; line-height: 10px; }
.qat > .tri { width: 16px; }
.tri::after { content: ""; border: solid transparent; border-width: 5px 4px 0; border-top-color: #000; }
.caption { flex: 1; text-align: center; color: #000; line-height: 24px; padding-left: 10px; }
.caption span { padding: 0 16px; background: radial-gradient(closest-side, #7d8a94, #4b5963 60%, transparent); display: inline-block; }
.info { width: 479px; flex: none; color: #fff; }
.info button { width: 24px; display: grid; place-items: center; flex: none; }
.play { border: solid transparent; border-width: 5px 0 5px 5px; border-left-color: #000; margin: 0 4px 0 4px; }
.info input { width: 178px; height: 23px; background: #efefef; color: #555; font-style: italic; font-size: 11px; padding-left: 3px; align-self: flex-start; margin-top: 2px; }
.info input::placeholder { color: #666; }
.info .sign { display: flex; align-items: center; gap: 4px; width: auto; padding-left: 5px; }
.push { margin-left: auto; }
.info .help { width: 18px; height: 18px; border-radius: 50%; background: #2a62ac; border: 2px solid #eee; font-weight: 700; line-height: 14px; margin: 0 4px 0 6px; }
.win { display: flex; flex: none; width: 119px; padding: 0 4px 4px 14px; background: linear-gradient(#69757e, #424e57); }
.win button { width: 28px; height: 19px; border: 1px solid #b8c0c6; border-top: 0; background: linear-gradient(#8d979f, #3c474f 50%, #56626a); display: grid; place-items: center; border-radius: 0 0 0 4px; }
.win button + button { border-radius: 0; border-left: 0; }
.win .close { flex: 1; background: linear-gradient(#e09a88, #b8301c 50%, #d0604a); color: #fff; font-weight: 700; font-size: 15px; line-height: 14px; border-radius: 0 0 4px 0; }
.tabs { display: flex; align-items: flex-start; gap: 1px; padding: 1px 0 0 3px; height: 18px; color: #eee; }
.tabs a { color: #eee; text-decoration: none; padding: 0 10px 0 9px; line-height: 15px; height: 17px; white-space: nowrap; font-size: 11px; }
.tabs a + a { padding-left: 10px; }
.tabs .on { background: #ececec; color: #444; }
.mini { width: 14px; height: 8px; margin: 4px 4px 0 20px; background: #e8e8e8; border-radius: 2px; display: grid; place-items: center; }
.mini::after { content: ""; border: solid transparent; border-width: 0 3px 4px; border-bottom-color: #333; }
.mcaret { margin-top: 7px; border: solid transparent; border-width: 3px 2px 0; border-top-color: #eee; }

/* ribbon */
.ribbon { display: flex; flex: none; height: 95px; background: linear-gradient(#d0d0d0, #8f8f8f); border-bottom: 1px solid #666; font-size: 11px; }
.panel { background: #fdfdfd; border-right: 1px solid #a8a8a8; display: flex; flex-direction: column; flex: none; }
.panel .body { flex: 1; display: flex; padding-top: 3px; }
.panel h2 { margin: 0; height: 18px; background: #efefef; border-top: 1px solid #dcdcdc; font: inherit; line-height: 16px; text-align: center; }
.p-sketch { width: 79px; } .p-prim { width: 63px; } .p-create { width: 234px; } .p-modify { width: 337px; } .p-work { width: 127px; }
.p-pattern { width: 99px; } .p-surface { width: 210px; } .p-plastic { width: 142px; } .p-harness { width: 89px; } .p-convert { width: 73px; }
.big { position: relative; flex: none; text-align: center; line-height: 15px; align-self: flex-start; white-space: nowrap; width: 100%; }
.big .ic { width: 32px; height: 32px; margin: 2px auto 4px; }
.p-create .big { width: 46px; } .p-modify .big { width: 38px; } .p-work .big { width: 54px; }
.p-modify .body { padding-left: 2px; }
.p-create .body { padding-left: 1px; }
.col { display: flex; flex-direction: column; }
.col button { display: flex; align-items: center; gap: 5px; height: 24px; padding-left: 4px; white-space: nowrap; }
.p-create .col:nth-child(3) { width: 65px; margin-left: 1px; }
.p-modify .col:nth-child(3) { width: 77px; }
.p-modify .col:nth-child(4) { width: 80px; }
.p-pattern .col, .p-surface .col:first-child, .p-harness .col, .p-plastic .col:first-child { margin-left: 3px; }
.p-surface .col:first-child { width: 114px; }
.p-plastic .col:first-child { width: 55px; }
.car { display: block; width: 0; margin: 4px auto 0; border: solid transparent; border-width: 3px 2px 0; border-top-color: #333; }
.car.in { margin: 0 0 0 4px; }
.car.side { position: absolute; right: 6px; bottom: 9px; }
.dn { display: inline-block; border: solid transparent; border-width: 5px 4px 0; border-top-color: #444; margin: 0 0 1px 3px; }

/* model browser */
.work { display: flex; flex: 1; min-height: 0; }
.browser { width: 245px; flex: none; background: #efefef; border-right: 1px solid #555; padding: 3px 5px 3px 3px; display: flex; flex-direction: column; font-size: 11px; color: #111; }
.grip { display: flex; align-items: center; gap: 3px; height: 12px; flex: none; }
.grip i { flex: 1; height: 4px; border: 1px solid #a0a0b4; border-width: 1px 0; }
.grip button { width: 12px; display: grid; place-items: center; }
.bhead { display: flex; justify-content: space-between; align-items: center; height: 21px; background: #a9a9a9; color: #fff; font-weight: 700; font-size: 12px; flex: none; padding: 0 4px 0 8px; }
.bhead i { display: inline-block; border: solid transparent; border-width: 5px 4px 0; border-top-color: #fff; margin-bottom: 1px; }
.bhelp { width: 13px; height: 14px; border: 1px solid #111; background: #ffffd8; color: #000; line-height: 12px; font-size: 11px; }
.btools { display: flex; align-items: center; height: 28px; gap: 7px; padding: 0 3px 4px; flex: none; }
.btools i { width: 1px; height: 18px; background: #bbb; }
.treebox { flex: 1; min-height: 0; display: flex; background: #fff; border: 1px solid #666; }
.tree { flex: 1; margin: 0; padding: 1px 0 0; list-style: none; overflow: hidden; font-family: "DejaVu Sans Condensed", "DejaVu Sans", sans-serif; font-size: 11px; }
.tree li { position: relative; height: 18px; display: flex; align-items: center; gap: 2px; padding-left: 24px; line-height: 18px; white-space: nowrap; }
.tree .root { padding-left: 5px; }
.tree .flag { margin-right: -2px; }
.tree li:not(.root)::before { content: ""; position: absolute; left: 8px; top: 0; width: 12px; height: 18px; border-left: 1px solid #999; background: linear-gradient(#999, #999) 0 8px / 12px 1px no-repeat; }
.tree button { position: absolute; left: 4px; top: 4px; width: 9px; height: 9px; border: 1px solid #888; background: linear-gradient(#000, #000) 1px 3px / 5px 1px no-repeat, linear-gradient(#000, #000) 3px 1px / 1px 5px no-repeat, #fff; }
.sbar { width: 16px; background: #f0f0f0; display: flex; flex-direction: column; align-items: center; }
.up, .down { height: 18px; width: 7px; flex: none; display: grid; align-items: center; }
.up::after, .down::after { content: ""; border: solid transparent; border-width: 0 3px 4px; border-bottom-color: #444; }
.down::after { border-width: 4px 3px 0; border-top-color: #444; }
.thumb { width: 15px; flex: 0 1 532px; border: 1px solid #999; border-radius: 2px; background: linear-gradient(90deg, #f8f8f8, #e8e8e8 45%, #cfcfcf); display: grid; place-items: center; }
.thumb i { width: 7px; height: 7px; background: repeating-linear-gradient(#555 0 1px, transparent 1px 3px); }
.down { margin-top: auto; }

/* graphics window: items are placed on a free canvas */
.view { position: relative; flex: 1; overflow: hidden; background: linear-gradient(#2e2e2e, #a1a1a1); }
.model { position: absolute; left: 585px; top: 65px; }
.engrave { font: 15px "Noto Sans", sans-serif; fill: #4c4c20; }
.mark { position: absolute; left: 290px; top: 338px; margin: 0; font: 59px/80px "Liberation Serif", serif; color: #d6d6d6; white-space: nowrap; }
.mark span { font: 300 62px/80px "Noto Sans CJK SC", sans-serif; }
.triad { position: absolute; left: 40px; bottom: 38px; font: 13px "Noto Sans", sans-serif; }
.wheel { position: absolute; right: 253px; top: 176px; }
.wt { font: 700 11px "Noto Sans", sans-serif; fill: #1c1c1c; }
.wi { font-size: 9px; }
.cube { position: absolute; right: 33px; top: 60px; width: 54px; height: 54px; background: #858585; box-shadow: 0 2px 6px #222; display: grid; place-items: center; }
.cube span { width: 34px; height: 34px; line-height: 34px; background: #74797d; color: #4e565b; font-weight: 700; text-align: center; }
.docwin { position: absolute; right: 0; top: 7px; display: flex; gap: 8px; }
.navbar { position: absolute; right: 0; top: 146px; width: 33px; height: 197px; background: #7c7c7c; border-radius: 4px 0 0 4px; box-shadow: 0 0 2px #222; }

/* status bar and taskbar */
.status { display: flex; flex: none; height: 27px; line-height: 29px; padding-left: 1px; background: linear-gradient(#f6f6f6, #bdbdbd); color: #222; border-bottom: 1px solid #888; font-size: 11px; }
.status span { flex: 1; }
.status b { font-weight: 400; width: 39px; text-align: center; border-left: 1px solid #ddd; padding-right: 10px; }
.task { display: flex; flex: none; height: 35px; background: linear-gradient(#2b3238, #0d1217 10%, #080b10); padding-left: 7px; overflow: hidden; color: #fff; }
.task > button { width: 61px; flex: none; display: grid; justify-items: center; position: relative; }
.task > button:first-child { width: 40px; margin-right: 12px; }
.task > button.lit { width: 58px; margin-right: 4px; border: 1px solid #777; background: radial-gradient(circle at 50% 100%, #333, #6d6d6d); }
.task > button.act { background: linear-gradient(90deg, #ddd, #a0a0a0 50%, #666); }
.task small { position: absolute; bottom: -1px; font-size: 9px; line-height: 10px; font-weight: 700; color: #fff; }
.task > button:nth-child(4) { margin-right: 4px; }
.tray { margin-left: auto; display: flex; align-items: center; gap: 8px; }
.tray svg { width: 16px; height: 16px; margin-top: 4px; }
.tray time { font-size: 11px; line-height: 17px; text-align: center; width: 66px; margin: 4px 0 0 3px; }
.tray .desk { width: 10px; height: 35px; border-left: 1px solid #777; background: linear-gradient(#555, #222); margin-left: -6px; }
```
